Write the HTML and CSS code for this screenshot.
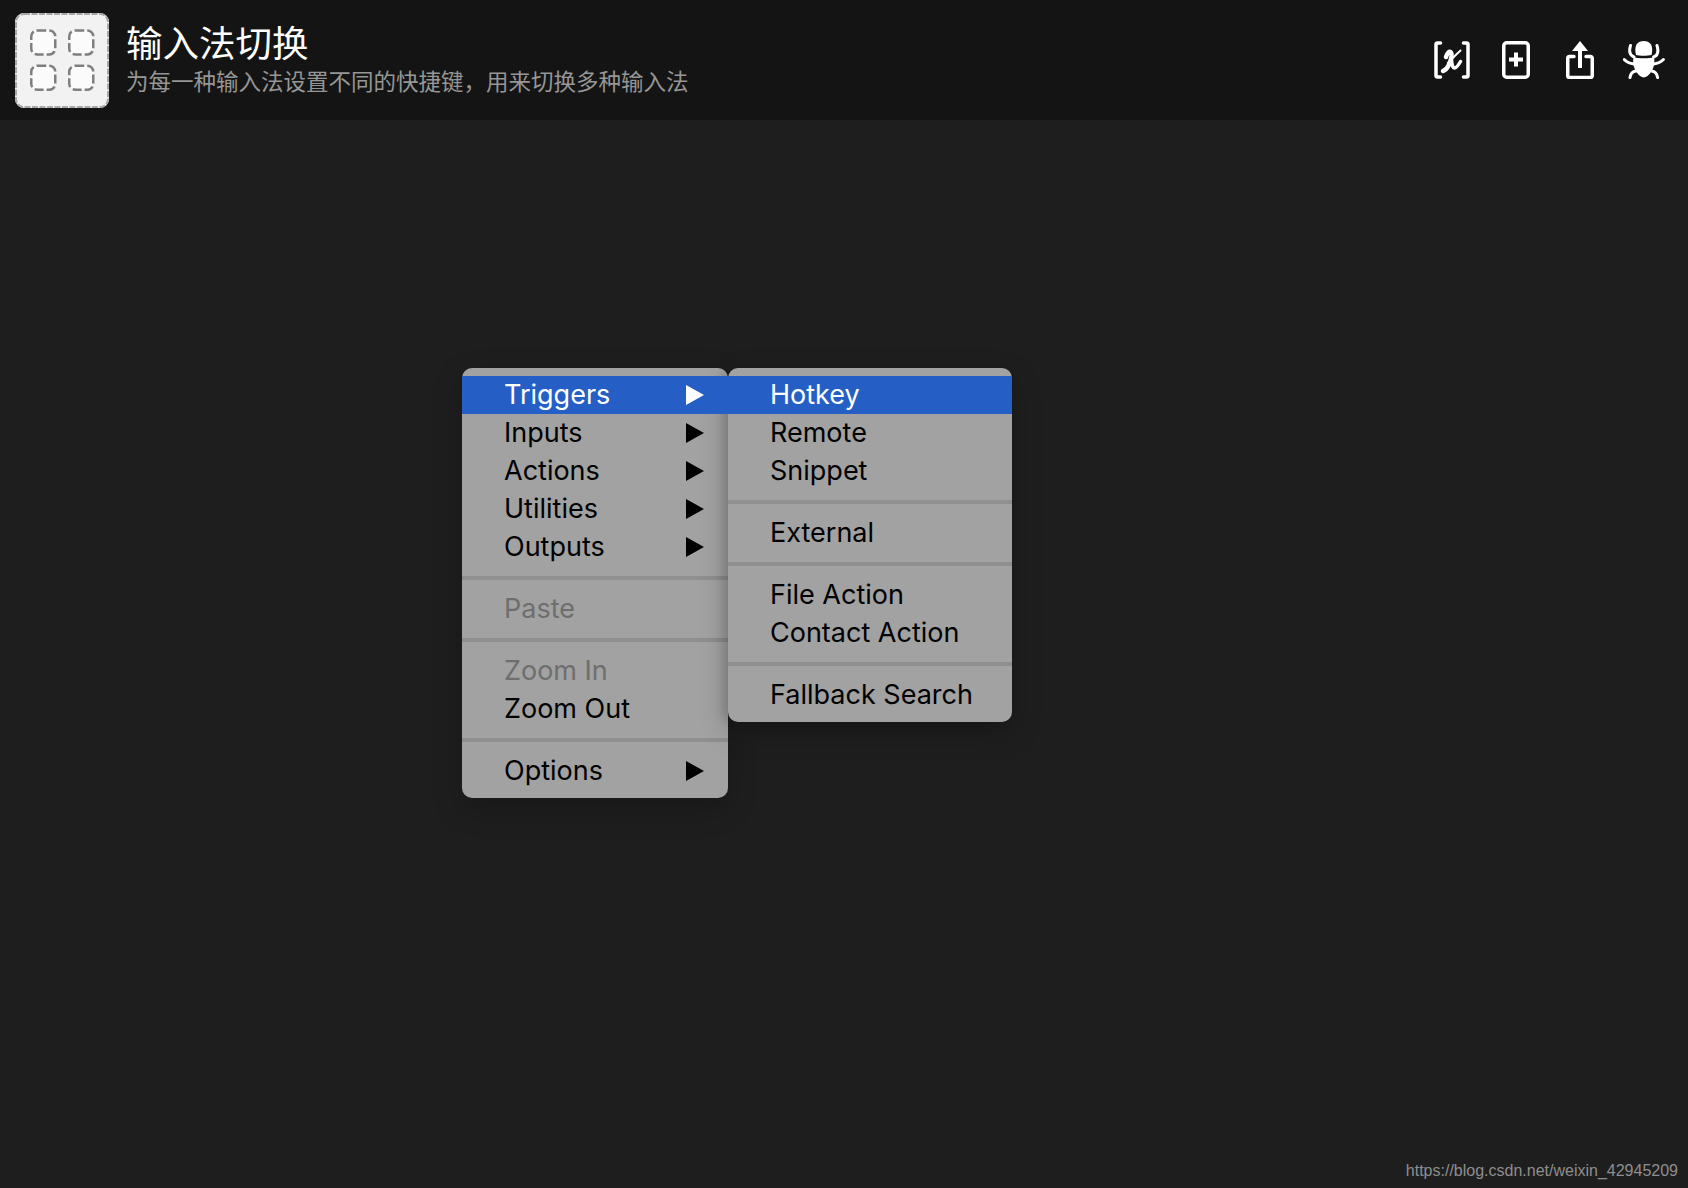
FILE: index.html
```html
<!DOCTYPE html>
<html lang="zh">
<head>
<meta charset="utf-8">
<title>输入法切换</title>
<link rel="stylesheet" href="styles.css">
</head>
<body>
<header class="topbar">
  <div class="tile">
    <svg class="tile-art" viewBox="0 0 94 95" width="94" height="95">
      <rect class="edge" x="1" y="1" width="92" height="93" rx="8"/>
      <rect class="slot" x="16.250" y="17.450" width="24" height="24" rx="6"/>
      <rect class="slot" x="54.250" y="17.450" width="24" height="24" rx="6"/>
      <rect class="slot" x="16.250" y="52.750" width="24" height="24" rx="6"/>
      <rect class="slot" x="54.250" y="52.750" width="24" height="24" rx="6"/>
    </svg>
  </div>
  <div class="titles">
    <div class="title">输入法切换</div>
    <div class="subtitle">为每一种输入法设置不同的快捷键，用来切换多种输入法</div>
  </div>
  <div class="tools">
    <div class="tool">
      <svg width="36" height="38" viewBox="0 0 36 38">
        <path class="line" d="M6.500 2H3.500A1.500 1.500 0 0 0 2 3.500v31A1.500 1.500 0 0 0 3.500 36h3M29.500 2h3A1.500 1.500 0 0 1 34 3.500v31a1.500 1.500 0 0 1-1.500 1.500h-3"/>
        <path class="line heavy" d="M12 16C13.500 11.500 15.500 9.500 17 11.500C18.500 14 16.500 20 14.500 24.500C13 27.500 11 29.500 9 30"/>
        <path class="line thin" d="M14 22C18 18 22.500 13 26.500 9.500"/>
        <path class="line" d="M17.500 17C17.500 22 18.500 27 20.500 27C22.500 27 24.500 24 26.500 20.500"/>
      </svg>
    </div>
    <div class="tool">
      <svg width="28" height="38" viewBox="0 0 28 38">
        <rect class="line" x="1.750" y="1.750" width="24.500" height="34.500" rx="3"/>
        <path class="plus" d="M14 11.500v14M7 18.500h14"/>
      </svg>
    </div>
    <div class="tool">
      <svg width="28" height="38" viewBox="0 0 28 38">
        <path class="line" d="M8 15.500H3.500A1.750 1.750 0 0 0 1.750 17.250v17.500A1.750 1.750 0 0 0 3.500 36.500h21a1.750 1.750 0 0 0 1.750-1.750V17.250A1.750 1.750 0 0 0 24.500 15.500H20"/>
        <path class="stem" d="M14 8v19"/>
        <path class="solid" d="M14 0l8 10H6z"/>
      </svg>
    </div>
    <div class="tool">
      <svg width="42" height="40" viewBox="0 0 42 40">
        <path class="solid" d="M13 15C12 11 12 7 13.500 4.500C15 2 18 1 20.800 1C23.600 1 26.500 2 28 4.500C29.500 7 29.500 11 28.500 15C24 16 17 16 13 15z"/>
        <path class="solid" d="M10.500 17.500C15 18.500 26.500 18.500 31 17.500C32 22 31 28 28 32C26 35 23 37.500 20.800 37.500C18.500 37.500 15.500 35 13.500 32C10.500 28 9.500 22 10.500 17.500z"/>
        <path class="leg" d="M11 17C7 15.500 5.500 12 7.500 5.500M30.600 17C34.600 15.500 36 12 34 5.500M11 24C7 23.500 3.500 22 1.200 19.500M30.600 24C34.600 23.500 38 22 40.400 19.500M13 31C9.500 31.500 7.500 33.500 7 37.500M28.600 31C32 31.500 34 33.500 34.600 37.500"/>
      </svg>
    </div>
  </div>
</header>

<main class="canvas">
  <div class="menus">
    <div class="menu">
      <div class="item active has-sub">Triggers</div>
      <div class="item has-sub">Inputs</div>
      <div class="item has-sub">Actions</div>
      <div class="item has-sub">Utilities</div>
      <div class="item has-sub">Outputs</div>
      <div class="sep"></div>
      <div class="item off">Paste</div>
      <div class="sep"></div>
      <div class="item off">Zoom In</div>
      <div class="item">Zoom Out</div>
      <div class="sep"></div>
      <div class="item has-sub">Options</div>
    </div>
    <div class="menu sub">
      <div class="item active">Hotkey</div>
      <div class="item">Remote</div>
      <div class="item">Snippet</div>
      <div class="sep"></div>
      <div class="item">External</div>
      <div class="sep"></div>
      <div class="item">File Action</div>
      <div class="item">Contact Action</div>
      <div class="sep"></div>
      <div class="item">Fallback Search</div>
    </div>
  </div>
  <div class="watermark">https://blog.csdn.net/weixin_42945209</div>
</main>
</body>
</html>
```
FILE: styles.css
```css
* { box-sizing: border-box; }
html, body { margin: 0; height: 100%; }
body {
  background: #1e1e1e;
  display: flex;
  flex-direction: column;
  font-family: Inter, "Liberation Sans", "Noto Sans CJK SC", sans-serif;
  overflow: hidden;
}
.topbar {
  height: 120px;
  background: #141414;
  display: flex;
  align-items: center;
  padding: 0 12px 0 15px;
  flex: none;
}
.tile {
  width: 94px;
  height: 95px;
  background: #f2f2f2;
  border-radius: 9px;
  flex: none;
}
.tile-art { display: block; }
.edge {
  fill: none;
  stroke: #a8a8a8;
  stroke-width: 2;
  stroke-dasharray: 6 1.500;
}
.slot {
  fill: #fbfbfb;
  stroke: #7f7f7f;
  stroke-width: 2.500;
  stroke-dasharray: 9 3;
}
.titles {
  margin-left: 17px;
  padding-bottom: 5px;
  display: flex;
  flex-direction: column;
  font-family: "Noto Sans CJK SC", sans-serif;
}
.title {
  font-size: 36.500px;
  line-height: 46px;
  color: #fff;
}
.subtitle {
  font-size: 22.500px;
  line-height: 31px;
  color: #969696;
}
.tools {
  margin-left: auto;
  display: flex;
  align-items: center;
}
.tool {
  width: 64px;
  display: flex;
  justify-content: center;
}
.tool svg { display: block; flex: none; }
.line { fill: none; stroke: #fff; stroke-width: 3.500; stroke-linecap: round; stroke-linejoin: round; }
.heavy { stroke-width: 4.500; }
.thin { stroke-width: 2; }
.plus { fill: none; stroke: #fff; stroke-width: 4; }
.stem { fill: none; stroke: #fff; stroke-width: 4; }
.solid { fill: #fff; }
.leg { fill: none; stroke: #fff; stroke-width: 3; stroke-linecap: round; }

.canvas { flex: 1; position: relative; }
.menus {
  position: absolute;
  left: 462px;
  top: 248px;
  display: flex;
  align-items: flex-start;
}
.menu {
  width: 266px;
  padding: 8px 0 7.500px;
  background: #a2a2a2;
  border-radius: 10px;
  box-shadow: 0 10px 30px rgba(0, 0, 0, .22);
  color: #000;
}
.sub {
  width: 284px;
  padding-bottom: 8px;
  box-shadow: -6px 0 10px rgba(0, 0, 0, .12), 0 10px 30px rgba(0, 0, 0, .22);
}
.item {
  height: 38px;
  line-height: 38px;
  padding-left: 42px;
  font-size: 27px;
  font-weight: 420;
  position: relative;
  white-space: nowrap;
}
.active { background: #255fc5; color: #fff; }
.off { color: #6e6e6e; }
.has-sub::after {
  content: "";
  position: absolute;
  right: 24px;
  top: 9px;
  border-left: 18px solid currentColor;
  border-top: 10px solid transparent;
  border-bottom: 10px solid transparent;
}
.sep {
  height: 4px;
  margin: 10px 0;
  background: #8f8f8f;
}
.watermark {
  position: absolute;
  right: 10px;
  bottom: 8px;
  font-family: "Liberation Sans", sans-serif;
  font-size: 16px;
  color: #8e8e8e;
}
```
